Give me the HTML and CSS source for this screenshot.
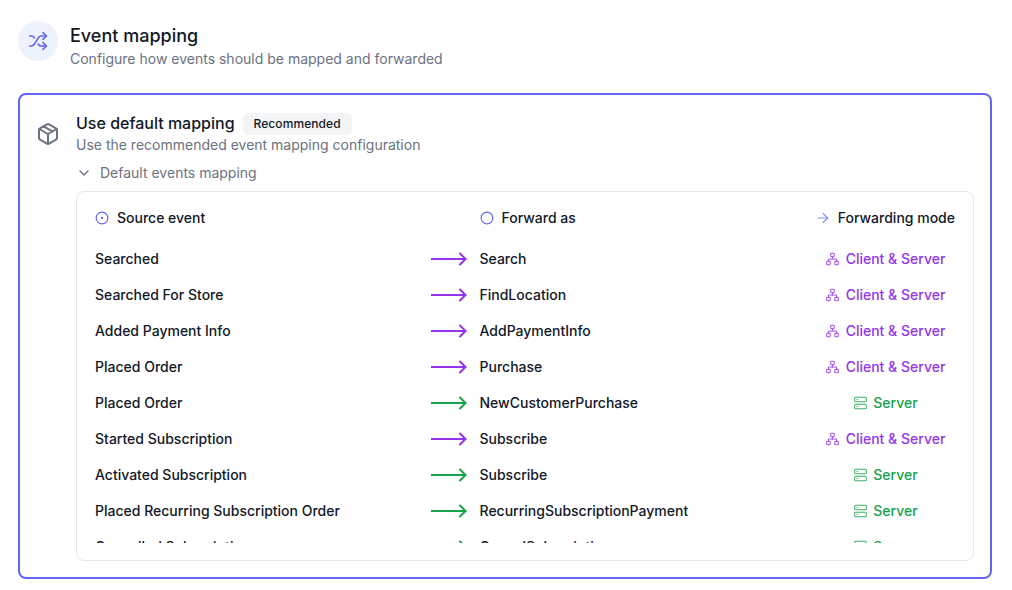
FILE: index.html
```html
<!DOCTYPE html>
<html lang="en">
<head>
<meta charset="utf-8">
<title>Event mapping</title>
<link rel="stylesheet" href="styles.css">
</head>
<body>
<svg class="defs" aria-hidden="true">
  <symbol id="net" viewBox="0 0 24 24"><rect x="16" y="16" width="6" height="6" rx="1"/><rect x="2" y="16" width="6" height="6" rx="1"/><rect x="9" y="2" width="6" height="6" rx="1"/><path d="M5 16v-3a1 1 0 0 1 1-1h12a1 1 0 0 1 1 1v3"/><path d="M12 12V8"/></symbol>
  <symbol id="srv" viewBox="0 0 24 24"><rect x="2" y="2" width="20" height="8" rx="2"/><rect x="2" y="14" width="20" height="8" rx="2"/><path d="M6 6h1"/><path d="M6 18h1"/></symbol>
  <symbol id="arr" viewBox="0 0 36 14"><path d="M0.5 7H34.5"/><path d="M29 1.5 34.5 7 29 12.5"/></symbol>
</svg>
<header class="head">
  <div class="head-icon">
    <svg class="ic ic-20" viewBox="0 0 24 24"><path d="m18 14 4 4-4 4"/><path d="m18 2 4 4-4 4"/><path d="M2 18h1.973a4 4 0 0 0 3.3-1.7l5.454-8.6a4 4 0 0 1 3.3-1.7H22"/><path d="M2 6h1.972a4 4 0 0 1 3.6 2.2"/><path d="M22 18h-6.041a4 4 0 0 1-3.3-1.8l-.359-.45"/></svg>
  </div>
  <div>
    <h1 class="title">Event mapping</h1>
    <p class="sub">Configure how events should be mapped and forwarded</p>
  </div>
</header>
<section class="card">
  <svg class="ic box-icon" viewBox="0 0 24 24"><path d="M11 21.73a2 2 0 0 0 2 0l7-4A2 2 0 0 0 21 16V8a2 2 0 0 0-1-1.73l-7-4a2 2 0 0 0-2 0l-7 4A2 2 0 0 0 3 8v8a2 2 0 0 0 1 1.73z"/><path d="M12 22V12"/><path d="m3.3 7 8.7 5 8.7-5"/><path d="m7.5 4.27 9 5.15"/></svg>
  <div class="card-main">
    <div class="card-title-row">
      <h2 class="card-title">Use default mapping</h2>
      <span class="badge">Recommended</span>
    </div>
    <p class="sub card-sub">Use the recommended event mapping configuration</p>
    <div class="toggle">
      <svg class="ic chev" viewBox="0 0 24 24"><path d="m6 9 6 6 6-6"/></svg>
      <span>Default events mapping</span>
    </div>
    <div class="panel">
      <div class="scroll">
        <div class="row row-head">
          <div class="cell-h"><svg class="ic ic-14 accent" viewBox="0 0 24 24"><circle cx="12" cy="12" r="10"/><circle cx="12" cy="12" r="1"/></svg>Source event</div>
          <div></div>
          <div class="cell-h"><svg class="ic ic-14 accent" viewBox="0 0 24 24"><circle cx="12" cy="12" r="10"/></svg>Forward as</div>
          <div class="cell-h cell-m"><svg class="ic head-arrow" viewBox="0 0 24 24"><path d="M5 12h14"/><path d="m12 5 7 7-7 7"/></svg>Forwarding mode</div>
        </div>
        <div class="row"><div>Searched</div><svg class="arrow purple"><use href="#arr"/></svg><div>Search</div><div class="mode purple"><svg class="ic mode-icon"><use href="#net"/></svg>Client &amp; Server</div></div>
        <div class="row"><div>Searched For Store</div><svg class="arrow purple"><use href="#arr"/></svg><div>FindLocation</div><div class="mode purple"><svg class="ic mode-icon"><use href="#net"/></svg>Client &amp; Server</div></div>
        <div class="row"><div>Added Payment Info</div><svg class="arrow purple"><use href="#arr"/></svg><div>AddPaymentInfo</div><div class="mode purple"><svg class="ic mode-icon"><use href="#net"/></svg>Client &amp; Server</div></div>
        <div class="row"><div>Placed Order</div><svg class="arrow purple"><use href="#arr"/></svg><div>Purchase</div><div class="mode purple"><svg class="ic mode-icon"><use href="#net"/></svg>Client &amp; Server</div></div>
        <div class="row"><div>Placed Order</div><svg class="arrow green"><use href="#arr"/></svg><div>NewCustomerPurchase</div><div class="mode green"><svg class="ic mode-icon"><use href="#srv"/></svg>Server</div></div>
        <div class="row"><div>Started Subscription</div><svg class="arrow purple"><use href="#arr"/></svg><div>Subscribe</div><div class="mode purple"><svg class="ic mode-icon"><use href="#net"/></svg>Client &amp; Server</div></div>
        <div class="row"><div>Activated Subscription</div><svg class="arrow green"><use href="#arr"/></svg><div>Subscribe</div><div class="mode green"><svg class="ic mode-icon"><use href="#srv"/></svg>Server</div></div>
        <div class="row"><div>Placed Recurring Subscription Order</div><svg class="arrow green"><use href="#arr"/></svg><div>RecurringSubscriptionPayment</div><div class="mode green"><svg class="ic mode-icon"><use href="#srv"/></svg>Server</div></div>
        <div class="row"><div>Cancelled Subscription</div><svg class="arrow green"><use href="#arr"/></svg><div>CancelSubscription</div><div class="mode green"><svg class="ic mode-icon"><use href="#srv"/></svg>Server</div></div>
      </div>
    </div>
  </div>
</section>
</body>
</html>
```

FILE: styles.css
```css
* { box-sizing: border-box; }
html, body { height: 100%; }
body {
  margin: 0;
  padding: 21px 20px 0 18px;
  background: #fff;
  color: #111827;
  font-family: Inter, "Liberation Sans", sans-serif;
  font-size: 14px;
  line-height: 20px;
  overflow: hidden;
}
h1, h2, p { margin: 0; }
.defs { width: 0; height: 0; position: absolute; }
.ic {
  fill: none;
  stroke: currentColor;
  stroke-width: 2;
  stroke-linecap: round;
  stroke-linejoin: round;
  flex: none;
}
.ic-20 { width: 20px; height: 20px; }
.ic-14 { width: 14px; height: 14px; }
.mode-icon { width: 14px; height: 14px; stroke-width: 1.75; opacity: 0.85; }
.head { display: flex; gap: 12px; align-items: flex-start; height: 40px; }
.head-icon {
  width: 40px;
  height: 40px;
  border-radius: 50%;
  background: #eef2ff;
  color: #6366f1;
  display: flex;
  align-items: center;
  justify-content: center;
}
.title { font-size: 18px; line-height: 28px; font-weight: 500; color: #111827; padding-top: 1px; margin-bottom: -1px; }
.sub { font-size: 14px; line-height: 20px; color: #6b7280; }
.card {
  margin-top: 32px;
  height: 486px;
  border: 2px solid #6366f1;
  border-radius: 8px;
  padding: 17px 16px 16px 16px;
  display: flex;
  gap: 16px;
}
.box-icon { width: 24px; height: 24px; margin-top: 10px; color: #6b7280; }
.card-main { flex: 1; min-width: 0; display: flex; flex-direction: column; }
.card-title-row { display: flex; align-items: center; gap: 8px; height: 22px; margin-top: 1px; }
.card-title { font-size: 16px; line-height: 20px; font-weight: 500; margin-top: -1px; margin-bottom: 1px; }
.badge {
  background: #f3f4f6;
  border-radius: 6px;
  padding: 0 11px;
  height: 22px;
  font-size: 12px;
  line-height: 22px;
  font-weight: 500;
  letter-spacing: 0.08px;
  color: #111827;
}
.toggle {
  display: flex;
  align-items: center;
  gap: 8px;
  margin-top: 8px;
  height: 20px;
  color: #6b7280;
}
.chev { width: 16px; height: 16px; }
.panel {
  margin-top: 8px;
  height: 370px;
  border: 1px solid #e5e7eb;
  border-radius: 8px;
  padding: 18px;
}
.scroll { height: 333px; overflow: hidden; }
.row {
  display: grid;
  grid-template-columns: 336px 35px 13.5px 337.5px 138px;
  align-items: center;
  height: 36px;
  color: #111827;
  font-weight: 500;
}
.row > :nth-child(3) { grid-column: 4; }
.row > :nth-child(4) { grid-column: 5; }
.row-head { height: 16px; line-height: 16px; margin-bottom: 15px; }
.cell-h { display: flex; align-items: center; gap: 8px; white-space: nowrap; height: 16px; }
.cell-m { justify-content: flex-end; gap: 7px; }
.accent { color: #6366f1; }
.head-arrow { width: 16px; height: 16px; color: #818cf8; stroke-width: 1.75; }
.arrow { width: 36px; height: 14px; fill: none; stroke: currentColor; stroke-width: 2; stroke-linecap: round; stroke-linejoin: round; }
.mode { display: flex; align-items: center; justify-content: center; gap: 6px; transform: translateX(-0.5px); }
.purple { color: #9333ea; }
.green { color: #16a34a; }
```
